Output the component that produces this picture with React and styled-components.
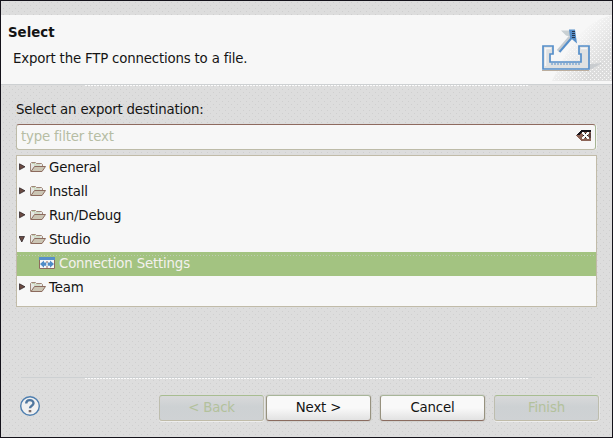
import React from 'react';
import styled, { createGlobalStyle, css } from 'styled-components';

const Global = createGlobalStyle`
  * { box-sizing: border-box; }
  body { margin: 0; overflow: hidden; }
`;

const dots = css`
  background-color: #dddddd;
  background-image:
    conic-gradient(from 0deg at 1px 1px, transparent 75%, #cfcfcf 0),
    conic-gradient(from 0deg at 1px 1px, transparent 75%, #cfcfcf 0);
  background-size: 6px 6px;
  background-position: 2px 1px, 5px 4px;
`;

const Dialog = styled.div`
  width: 613px;
  height: 438px;
  border: 1px solid #14121a;
  display: flex;
  flex-direction: column;
  font: 13.33px/18px "DejaVu Sans", sans-serif;
  letter-spacing: -0.18px;
  color: #141414;
  white-space: nowrap;
  ${dots}
`;

const Header = styled.header`
  height: 69px;
  margin-top: 14px;
  padding: 9px 19px 0 7px;
  background: #f7f7f7;
  display: flex;
  justify-content: space-between;
  position: relative;
`;

const Title = styled.h1`
  margin: 0;
  font-size: 13.33px;
  line-height: 18px;
  font-weight: bold;
  letter-spacing: 0;
`;

const Description = styled.p`
  margin: 8px 0 0 5px;
`;

const Shade = styled.svg`
  position: absolute;
  right: 0;
  top: 0;
`;

const ExportArt = styled.svg`
  position: relative;
  margin-top: 4px;
  overflow: visible;
`;

const Rule = styled.div`
  height: 2px;
  flex: none;
  margin: 0 ${p => p.$inset}px;
  padding: 0 ${p => 84 - p.$inset}px;
  border-top: 1px solid #cdd0d2;

  &::after {
    content: '';
    display: block;
    height: 1px;
    background: repeating-linear-gradient(90deg, #fcfcfc 0 2px, #dcdcdc 2px 3px);
  }
`;

const Content = styled.main`
  height: 291px;
  padding: 15px 14px 0 15px;
`;

const Label = styled.div`
  height: 23px;
  line-height: 18px;
`;

const Filter = styled.div`
  width: 580px;
  height: 26px;
  display: flex;
  align-items: center;
  justify-content: space-between;
  padding: 0 4px 1px 4px;
  background: #f7f7f7;
  border: 1px solid #bdbba8;
  border-top-color: #8e6a5f;
  border-right-color: #a6b594;
  border-radius: 3px;
  box-shadow: 1px 0 #f3f3f3;
  color: #b6bda4;
`;

const ClearArt = styled.svg`
  margin-bottom: 3px;
`;

const Tree = styled.div`
  width: 581px;
  height: 152px;
  margin-top: 5px;
  background: #f7f7f7;
  border: 1px solid #c1bba8;
`;

const Row = styled.div`
  height: 24px;
  display: flex;
  align-items: center;
  padding: 0 0 1px ${p => (p.$selected ? 22 : 2)}px;
  ${p => p.$selected && css`
    color: #f4f1ee;
    background:
      repeating-linear-gradient(90deg, #bfcbb1 0 1px, #a3c381 1px 3px) 0 3px / 100% 1px no-repeat,
      #a3c381;
  `}
`;

const Arrow = styled.svg`
  margin: -2px 5px 0 0;
`;

const FolderArt = styled.svg`
  margin-bottom: 1px;
`;

const RowText = styled.span`
  margin-left: ${p => p.$gap}px;
`;

const Footer = styled.footer`
  flex: 1;
  display: flex;
  align-items: flex-start;
  padding: 16px 11px 0 18px;
`;

const Help = styled.svg`
  margin: 0 118px 0 0;
`;

const Button = styled.button`
  width: 105px;
  height: 26px;
  margin: 0 0 0 ${p => p.$gap}px;
  padding: 0 0 1px;
  font: inherit;
  letter-spacing: inherit;
  color: ${p => (p.disabled ? '#b3c19c' : '#141414')};
  border: 1px solid;
  border-color: ${p => (p.disabled ? '#a8bd91 #bdbdae #c0bca9 #bdbdae' : '#a8b699 #97927f #8a6c60 #97927f')};
  border-radius: 3px;
  background: ${p => (p.disabled
    ? 'linear-gradient(#d8d9da, #cdd1d3 45%, #cfd2d4)'
    : 'linear-gradient(#f9f9f9 50%, #e2e2e2)')};
  box-shadow: ${p => (p.disabled ? '0 1px #eeeeee, 1px 0 #e7e7e7' : '0 0 0 1px #d2d2cf')};
`;

const Folder = () => (
  <FolderArt width="16" height="16" viewBox="0 0 16 16">
    <path d="M.5 12.5v-8l1-1h4l1 1h5l1 1v2" fill="#e6e7e4" stroke="#a08678" />
    <path d="M1 12.5 4.5 7.5h11l-3.5 5z" fill="#cbc5b4" stroke="#8c6b5e" strokeLinejoin="round" />
    <path d="M2 4.5h3M4 6h6" stroke="#a9c38d" opacity=".6" />
  </FolderArt>
);

const ConnectionIcon = () => (
  <svg width="16" height="13" viewBox="0 0 16 13">
    <path d="M.5.5h15v11H.5z" fill="#f7f7f7" stroke="#8c6b5e" />
    <path d="M0 0h16v3H0z" fill="#568fca" />
    <path d="M1 7l4-3.5v2h2.3v3.2H5v2zM15 7l-4-3.5v2H8.7v3.2H11v2z" fill="#4f8cc7" />
    <path d="M8 4v2M8 9v3" stroke="#8c6b5e" />
  </svg>
);

const ClearIcon = () => (
  <ClearArt width="15" height="12" viewBox="0 0 15 12" shapeRendering="crispEdges">
    <path d="M0 6 5 1H15V11.5H5z" fill="#8c6457" />
    <path d="M0 6 5 1H15V3H6L3 6z" fill="#17131a" />
    <path d="M13 4h2v5h-2z" fill="#5b413f" />
    <path d="M6 3h2v1h3V3h2v2h-1v3h1v2h-2V9H8v1H6V8h1V5H6z" fill="#fafafa" />
    <path d="M9 4h1v1H9zM9 8h1v1H9zM7 6h1v1H7zM11 6h1v1h-1z" fill="#17131a" />
  </ClearArt>
);

const ExportIcon = () => (
  <ExportArt width="52" height="44" viewBox="0 0 52 44">
    <path d="M49 36l12-1-10 6h-2z" fill="#c9cccf" />
    <path d="M2 18h10v8H9v8h31v-8h-2v-8h10v23H2z" fill="#dfe1e2" stroke="#568fca" strokeWidth="1.7" />
    <path d="M4 20.5h6M4.5 20v18M40 20.5h6" stroke="#f7f7f7" strokeWidth="1.5" fill="none" />
    <path d="M10 36h30" stroke="#568fca" strokeDasharray="2 1" />
    <path d="M1 42.5h47" stroke="#bcae9e" />
    <path d="M17 23 29 9" stroke="#c5cbd0" strokeWidth="3" />
    <path d="M18.5 24 31 9.5" stroke="#568fca" strokeWidth="2" />
    <path d="M20 2.5h10l-1 6-4-1z" fill="#c9d0d3" />
    <path d="M28 1.5h6l2 14-7-6z" fill="#568fca" />
    <path d="M32.5 3v8" stroke="#17131a" strokeWidth="3" strokeDasharray="1 1" opacity=".7" />
  </ExportArt>
);

const items = [
  { name: 'General' },
  { name: 'Install' },
  { name: 'Run/Debug' },
  { name: 'Studio', open: true },
  { name: 'Connection Settings', selected: true },
  { name: 'Team' },
];

function TreeRow({ item }) {
  if (item.selected) {
    return <Row $selected><ConnectionIcon /><RowText $gap={4}>{item.name}</RowText></Row>;
  }
  return (
    <Row>
      <Arrow width="6" height="8" viewBox="0 0 6 8">
        <path d={item.open ? 'M0 1.5h5.5L2.8 7z' : 'M.5.8v6L6 3.8z'} fill="#6b4b43" stroke="#221a1e" strokeWidth=".7" />
      </Arrow>
      <Folder />
      <RowText $gap={3}>{item.name}</RowText>
    </Row>
  );
}

export default function App() {
  return (
    <>
      <Global />
      <Dialog>
        <Header>
          <Shade width="70" height="69" viewBox="0 0 70 69">
            <defs>
              <linearGradient id="shade" x1="0" y1="0" x2="1" y2="1">
                <stop offset=".35" stopColor="#f7f7f7" />
                <stop offset=".78" stopColor="#dcdcdc" />
              </linearGradient>
              <pattern id="grain" width="4" height="4" patternUnits="userSpaceOnUse">
                <path d="M0 .5h1M2 2.5h1" stroke="#fafafa" />
              </pattern>
            </defs>
            <path d="M70 0C38 8 26 34 10 66H70z" fill="url(#shade)" />
            <path d="M70 0C38 8 26 34 10 66H70z" fill="url(#grain)" />
          </Shade>
          <div>
            <Title>Select</Title>
            <Description>Export the FTP connections to a file.</Description>
          </div>
          <ExportIcon />
        </Header>
        <Rule $inset={0} />
        <Content>
          <Label>Select an export destination:</Label>
          <Filter>type filter text<ClearIcon /></Filter>
          <Tree>
            {items.map(item => <TreeRow key={item.name} item={item} />)}
          </Tree>
        </Content>
        <Rule $inset={20} />
        <Footer>
          <Help width="22" height="22" viewBox="0 0 22 22">
            <circle cx="11" cy="11" r="9.3" fill="#f1f1f1" stroke="#4f7faf" strokeWidth="1.4" />
            <path d="M7.2 8.5C7.2 4 14.5 4 14.5 8.2C14.5 10.8 11 10.5 11 13.2" fill="none" stroke="#50779f" strokeWidth="2.4" />
            <path d="M9.7 15h2.6v2.3H9.7z" fill="#7d6b68" />
          </Help>
          <Button disabled $gap={0}>&lt; Back</Button>
          <Button $gap={2}>Next &gt;</Button>
          <Button $gap={9}>Cancel</Button>
          <Button disabled $gap={9}>Finish</Button>
        </Footer>
      </Dialog>
    </>
  );
}
